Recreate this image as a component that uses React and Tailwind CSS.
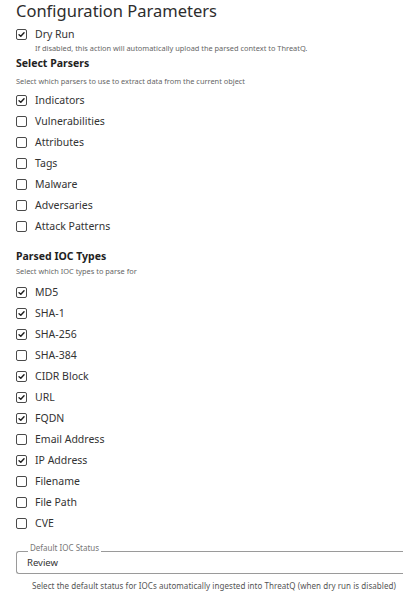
import React from 'react';

const parsers = [
  ['Indicators', true],
  ['Vulnerabilities', false],
  ['Attributes', false],
  ['Tags', false],
  ['Malware', false],
  ['Adversaries', false],
  ['Attack Patterns', false],
];

const iocTypes = [
  ['MD5', true],
  ['SHA-1', true],
  ['SHA-256', true],
  ['SHA-384', false],
  ['CIDR Block', true],
  ['URL', true],
  ['FQDN', true],
  ['Email Address', false],
  ['IP Address', true],
  ['Filename', false],
  ['File Path', false],
  ['CVE', false],
];

function Check({ checked }) {
  return (
    <span className="w-[11px] h-[11px] rounded-[2px] border-[1.5px] border-[#4a4a4a] flex items-center justify-center shrink-0">
      {checked && (
        <svg width="7" height="7" viewBox="0 0 10 10" fill="none">
          <path d="M1.5 5.2 L4 7.6 L8.6 2.4" stroke="#1f1f1f" strokeWidth="2" strokeLinecap="round" strokeLinejoin="round" />
        </svg>
      )}
    </span>
  );
}

function Row({ label, checked }) {
  return (
    <div className="h-[21px] flex items-center gap-[8px]">
      <Check checked={checked} />
      <span className="text-[10.5px] text-[#333]">{label}</span>
    </div>
  );
}

export default function App() {
  return (
    <div className="w-[403px] h-[600px] bg-white overflow-hidden pl-[16px] text-[#333]" style={{ fontFamily: '"Noto Sans", "Open Sans", sans-serif' }}>
      <h1 className="text-[16.5px] leading-[22px] text-[#2d2d2d]">Configuration Parameters</h1>
      <div className="mt-[2px]">
        <Row label="Dry Run" checked />
      </div>
      <p className="text-[7.4px] leading-[9px] text-[#666] pl-[19px] -mt-[1px]">
        If disabled, this action will automatically upload the parsed context to ThreatQ.
      </p>
      <h2 className="text-[10.5px] font-bold leading-[14px] mt-[3px] text-[#222]">Select Parsers</h2>
      <p className="text-[7.4px] leading-[9px] text-[#666] mt-[7px]">
        Select which parsers to use to extract data from the current object
      </p>
      <div className="mt-[4px]">
        {parsers.map(([l, c]) => (
          <Row key={l} label={l} checked={c} />
        ))}
      </div>
      <h2 className="text-[10.5px] font-bold leading-[14px] mt-[12px] text-[#222]">Parsed IOC Types</h2>
      <p className="text-[7.4px] leading-[9px] text-[#666] mt-[4px]">Select which IOC types to parse for</p>
      <div className="mt-[6px]">
        {iocTypes.map(([l, c]) => (
          <Row key={l} label={l} checked={c} />
        ))}
      </div>
      <fieldset className="mt-[9px] border border-r-0 border-[#9a9a9a] rounded-l-[3px] pl-[10px] pb-[3px] -mr-[4px]">
        <legend className="text-[8px] text-[#777] px-[2px] ml-[1px] leading-[9px] pb-[8px]">Default IOC Status</legend>
        <div className="text-[9.5px] text-[#333] leading-[14px] -mt-[4px]">Review</div>
      </fieldset>
      <p className="text-[8px] leading-[9px] text-[#555] pl-[16px] mt-[7px] whitespace-nowrap tracking-[0.05px]">
        Select the default status for IOCs automatically ingested into ThreatQ (when dry run is disabled)
      </p>
    </div>
  );
}
